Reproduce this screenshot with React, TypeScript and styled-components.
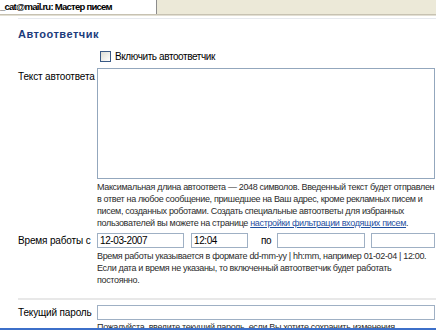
import React from "react";
import styled, { createGlobalStyle } from "styled-components";

const Global = createGlobalStyle`
  html, body { margin: 0; padding: 0; background: #fff; overflow: hidden; }
  body {
    font-family: "Liberation Sans", Arial, sans-serif;
    font-size: 10px;
    letter-spacing: -0.4px;
    color: #000;
  }
`;

const Page = styled.div`
  width: 436px;
  height: 330px;
  overflow: hidden;
  position: relative;
`;

const TabBar = styled.div`
  display: flex;
  height: 14px;
  background: #ece9d8;
  border-bottom: 1px solid #c7c2b2;
  box-shadow: 0 1px 0 #e2dfd3;
`;

const Tab = styled.div`
  width: 156px;
  background: #fff;
  border-right: 1px solid #8c8c8c;
  font-weight: bold;
  font-size: 9.5px;
  letter-spacing: -0.75px;
  line-height: 14px;
  white-space: nowrap;
  overflow: hidden;
`;

const Panel = styled.div`
  margin: 3px 0 0 18px;
  border-top: 1px solid #e6e9ee;
`;

const Heading = styled.h2`
  margin: 8px 0 0;
  font-size: 11px;
  letter-spacing: 0.5px;
  font-weight: bold;
  color: #1c3c7c;
  line-height: 14px;
`;

const Row = styled.div<{ $top?: number }>`
  display: grid;
  grid-template-columns: 70px 1fr;
  column-gap: 9px;
  margin-top: ${(p) => p.$top ?? 0}px;
  padding-right: 1px;
`;

const Label = styled.div<{ $pad?: number }>`
  text-align: right;
  white-space: nowrap;
  letter-spacing: -0.15px;
  padding-top: ${(p) => p.$pad ?? 0}px;
  line-height: 14px;
`;

const Field = styled.div`
  display: flex;
  flex-direction: column;
  min-width: 0;
`;

const CheckLine = styled.label`
  display: flex;
  align-items: center;
  gap: 4px;
  padding-left: 3px;
  height: 14px;
`;

const Check = styled.span`
  width: 9px;
  height: 9px;
  border: 1px solid #3a5a86;
  background: linear-gradient(135deg, #dcdcd4, #fff);
  flex: none;
`;

const TextArea = styled.div`
  height: 109px;
  border: 1px solid #93a7bd;
  background: #fff;
`;

const Help = styled.div<{ $top?: number }>`
  margin-top: ${(p) => p.$top ?? 2}px;
  font-size: 9px;
  letter-spacing: -0.34px;
  line-height: 12px;
  color: #2b2b2b;
  white-space: nowrap;
`;

const Link = styled.a`
  color: #1f4f9f;
  text-decoration: underline;
`;

const Inputs = styled.div`
  display: flex;
  align-items: center;
`;

const Input = styled.div<{ $w: number; $ml?: number }>`
  width: ${(p) => p.$w}px;
  margin-left: ${(p) => p.$ml ?? 0}px;
  height: 13px;
  border: 1px solid #9fb0c4;
  background: #fff;
  padding-left: 2px;
  line-height: 13px;
  box-sizing: content-box;
  white-space: nowrap;
  flex: none;
`;

const Po = styled.span`
  margin-left: 13px;
  width: 22px;
`;

const FullInput = styled.div`
  height: 13px;
  border: 1px solid #9fb0c4;
  background: #fff;
`;

const Separator = styled.div`
  height: 2px;
  background: #e8e8e8;
  margin-top: 12px;
`;

const BottomBar = styled.div`
  position: absolute;
  left: 0;
  right: 0;
  bottom: 0;
  height: 2px;
  background: #3c6fc9;
`;

export default function App() {
  return (
    <Page>
      <Global />
      <TabBar>
        <Tab>_cat@mail.ru: Мастер писем</Tab>
      </TabBar>
      <Panel>
        <Heading>Автоответчик</Heading>
        <Row $top={8}>
          <Label />
          <Field>
            <CheckLine>
              <Check />
              Включить автоответчик
            </CheckLine>
          </Field>
        </Row>
        <Row $top={5}>
          <Label $pad={2}>Текст автоответа</Label>
          <Field>
            <TextArea />
            <Help>
              Максимальная длина автоответа — 2048 символов. Введенный текст будет отправлен
              <br />
              в ответ на любое сообщение, пришедшее на Ваш адрес, кроме рекламных писем и
              <br />
              писем, созданных роботами. Создать специальные автоответы для избранных
              <br />
              пользователей вы можете на странице <Link>настройки фильтрации входящих писем</Link>.
            </Help>
          </Field>
        </Row>
        <Row $top={4}>
          <Label $pad={1}>Время работы с</Label>
          <Field>
            <Inputs>
              <Input $w={83}>12-03-2007</Input>
              <Input $w={53} $ml={7}>12:04</Input>
              <Po>по</Po>
              <Input $w={84}></Input>
              <Input $w={60} $ml={6}></Input>
            </Inputs>
            <Help>
              Время работы указывается в формате dd-mm-yy | hh:mm, например 01-02-04 | 12:00.
              <br />
              Если дата и время не указаны, то включенный автоответчик будет работать
              <br />
              постоянно.
            </Help>
          </Field>
        </Row>
        <Separator />
        <Row $top={5}>
          <Label $pad={1}>Текущий пароль</Label>
          <Field>
            <FullInput />
            <Help $top={1}>
              Пожалуйста, введите текущий пароль, если Вы хотите сохранить изменения.
            </Help>
          </Field>
        </Row>
      </Panel>
      <BottomBar />
    </Page>
  );
}
